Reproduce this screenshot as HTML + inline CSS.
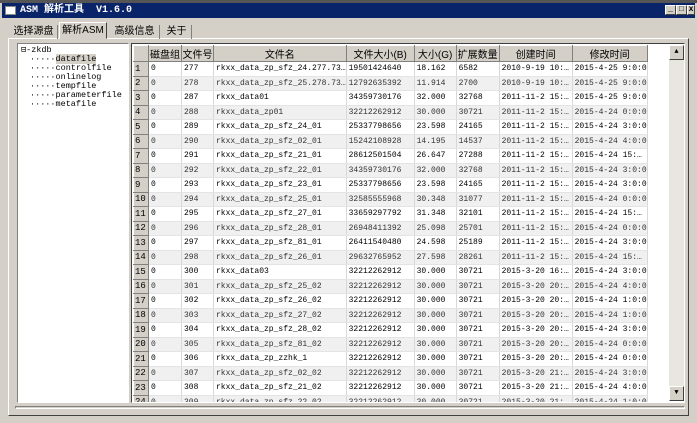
<!DOCTYPE html>
<html><head><meta charset="utf-8"><style>
*{margin:0;padding:0;box-sizing:border-box}
body{width:697px;height:423px;background:#d4d0c8;position:relative;overflow:hidden;font-family:"Liberation Mono","Noto Sans CJK SC",monospace;font-size:8px;color:#000}
.ab{position:absolute}
#top{left:0;top:0;width:697px;height:3px;background:#555}
#title{left:2px;top:3px;width:693px;height:15px;background:#0a246a;color:#fff;font-weight:bold;font-size:10px;line-height:15px;padding-left:18px}
.wb{position:absolute;top:2px;width:11px;height:10px;background:#d4d0c8;border:1px solid;border-color:#fff #404040 #404040 #fff;color:#000;font-size:8px;line-height:8px;text-align:center}
.tab{position:absolute;top:25px;height:14px;font-family:"Liberation Sans","Noto Sans CJK SC",sans-serif;font-size:10px;line-height:13px;text-align:center;border-right:1px solid #808080}
#panel{left:8px;top:38px;width:681px;height:378px;border:1px solid;border-color:#fff #404040 #404040 #fff}
#tree{left:17px;top:43px;width:112px;height:360px;background:#fff;border:1px solid;border-color:#808080 #fff #fff #808080}
#tree div{position:absolute;left:28px;font-size:8.5px;line-height:9px}
#grid{left:131px;top:43px;width:554px;height:360px;background:#fff;border:1px solid;border-color:#404040 #fff #fff #404040;overflow:hidden}
table{border-collapse:collapse;position:absolute;left:1px;top:1px;table-layout:fixed}
td{height:14.5px;white-space:nowrap;overflow:hidden;padding-left:2px;border-right:1px solid #d8d8d8;border-bottom:1px solid #e4e4e4;font-size:8px}
th{height:16px;background:#d4d0c8;font-weight:normal;font-family:"Liberation Sans","Noto Sans CJK SC",sans-serif;font-size:10px;border:1px solid;border-color:#fff #808080 #808080 #fff}
td.h{background:#d4d0c8;border:1px solid;border-color:#fff #808080 #808080 #fff;font-size:9px;padding-left:1px}
tr.g td{background:#f0f0f0;color:#333}
tr.g td.h{background:#d4d0c8;color:#000}
#sb{left:537px;top:1px;width:15px;height:356px;background:#e8e6e0}
.sbb{position:absolute;left:0;width:15px;height:15px;background:#d4d0c8;border:1px solid;border-color:#fff #404040 #404040 #fff;font-size:7px;text-align:center;line-height:12px}
</style></head><body>
<div class="ab" id="top"></div>
<div class="ab" id="title"><span style="position:absolute;left:3px;top:3px;width:11px;height:9px;background:#fff;border:1px solid #888"></span>ASM 解析工具 &nbsp;V1.6.0
<div class="wb" style="left:663px">_</div><div class="wb" style="left:674px">□</div><div class="wb" style="left:685px;width:8px">x</div></div>
<div class="ab" id="panel"></div>
<div class="tab" style="left:10px;width:48px">选择源盘</div>
<div class="tab" style="left:59px;width:48px;top:22px;height:17px;background:#d4d0c8;border:1px solid;border-color:#fff #404040 transparent #fff;line-height:15px">解析ASM</div>
<div class="tab" style="left:110px;width:50px">高级信息</div>
<div class="tab" style="left:162px;width:30px">关于</div>
<div class="ab" id="tree">
<div style="left:3px;top:2px">⊟-zkdb</div>
<div style="top:11px;left:12px">·····<span style="background:#d4d0c8">datafile</span></div>
<div style="top:20px;left:12px">·····controlfile</div>
<div style="top:29px;left:12px">·····onlinelog</div>
<div style="top:38px;left:12px">·····tempfile</div>
<div style="top:47px;left:12px">·····parameterfile</div>
<div style="top:56px;left:12px">·····metafile</div>
</div>
<div class="ab" id="grid">
<table>
<colgroup><col style="width:15px"><col style="width:33px"><col style="width:32px"><col style="width:130px"><col style="width:68px"><col style="width:42px"><col style="width:43px"><col style="width:73px"><col style="width:72px"></colgroup>
<tr><th style="background:#d4d0c8"></th><th>磁盘组</th><th>文件号</th><th>文件名</th><th>文件大小(B)</th><th>大小(G)</th><th>扩展数量</th><th>创建时间</th><th>修改时间</th></tr>
<tr><td class="h">1</td><td>0</td><td>277</td><td>rkxx_data_zp_sfz_24.277.73…</td><td>19501424640</td><td>18.162</td><td>6582</td><td>2010-9-19 10:…</td><td>2015-4-25 9:0:0</td></tr>
<tr class="g"><td class="h">2</td><td>0</td><td>278</td><td>rkxx_data_zp_sfz_25.278.73…</td><td>12792635392</td><td>11.914</td><td>2700</td><td>2010-9-19 10:…</td><td>2015-4-25 9:0:0</td></tr>
<tr><td class="h">3</td><td>0</td><td>287</td><td>rkxx_data01</td><td>34359730176</td><td>32.000</td><td>32768</td><td>2011-11-2 15:…</td><td>2015-4-25 9:0:0</td></tr>
<tr class="g"><td class="h">4</td><td>0</td><td>288</td><td>rkxx_data_zp01</td><td>32212262912</td><td>30.000</td><td>30721</td><td>2011-11-2 15:…</td><td>2015-4-24 0:0:0</td></tr>
<tr><td class="h">5</td><td>0</td><td>289</td><td>rkxx_data_zp_sfz_24_01</td><td>25337798656</td><td>23.598</td><td>24165</td><td>2011-11-2 15:…</td><td>2015-4-24 3:0:0</td></tr>
<tr class="g"><td class="h">6</td><td>0</td><td>290</td><td>rkxx_data_zp_sfz_02_01</td><td>15242108928</td><td>14.195</td><td>14537</td><td>2011-11-2 15:…</td><td>2015-4-24 4:0:0</td></tr>
<tr><td class="h">7</td><td>0</td><td>291</td><td>rkxx_data_zp_sfz_21_01</td><td>28612501504</td><td>26.647</td><td>27288</td><td>2011-11-2 15:…</td><td>2015-4-24 15:…</td></tr>
<tr class="g"><td class="h">8</td><td>0</td><td>292</td><td>rkxx_data_zp_sfz_22_01</td><td>34359730176</td><td>32.000</td><td>32768</td><td>2011-11-2 15:…</td><td>2015-4-24 3:0:0</td></tr>
<tr><td class="h">9</td><td>0</td><td>293</td><td>rkxx_data_zp_sfz_23_01</td><td>25337798656</td><td>23.598</td><td>24165</td><td>2011-11-2 15:…</td><td>2015-4-24 3:0:0</td></tr>
<tr class="g"><td class="h">10</td><td>0</td><td>294</td><td>rkxx_data_zp_sfz_25_01</td><td>32585555968</td><td>30.348</td><td>31077</td><td>2011-11-2 15:…</td><td>2015-4-24 0:0:0</td></tr>
<tr><td class="h">11</td><td>0</td><td>295</td><td>rkxx_data_zp_sfz_27_01</td><td>33659297792</td><td>31.348</td><td>32101</td><td>2011-11-2 15:…</td><td>2015-4-24 15:…</td></tr>
<tr class="g"><td class="h">12</td><td>0</td><td>296</td><td>rkxx_data_zp_sfz_28_01</td><td>26948411392</td><td>25.098</td><td>25701</td><td>2011-11-2 15:…</td><td>2015-4-24 0:0:0</td></tr>
<tr><td class="h">13</td><td>0</td><td>297</td><td>rkxx_data_zp_sfz_81_01</td><td>26411540480</td><td>24.598</td><td>25189</td><td>2011-11-2 15:…</td><td>2015-4-24 3:0:0</td></tr>
<tr class="g"><td class="h">14</td><td>0</td><td>298</td><td>rkxx_data_zp_sfz_26_01</td><td>29632765952</td><td>27.598</td><td>28261</td><td>2011-11-2 15:…</td><td>2015-4-24 15:…</td></tr>
<tr><td class="h">15</td><td>0</td><td>300</td><td>rkxx_data03</td><td>32212262912</td><td>30.000</td><td>30721</td><td>2015-3-20 16:…</td><td>2015-4-24 3:0:0</td></tr>
<tr class="g"><td class="h">16</td><td>0</td><td>301</td><td>rkxx_data_zp_sfz_25_02</td><td>32212262912</td><td>30.000</td><td>30721</td><td>2015-3-20 20:…</td><td>2015-4-24 4:0:0</td></tr>
<tr><td class="h">17</td><td>0</td><td>302</td><td>rkxx_data_zp_sfz_26_02</td><td>32212262912</td><td>30.000</td><td>30721</td><td>2015-3-20 20:…</td><td>2015-4-24 1:0:0</td></tr>
<tr class="g"><td class="h">18</td><td>0</td><td>303</td><td>rkxx_data_zp_sfz_27_02</td><td>32212262912</td><td>30.000</td><td>30721</td><td>2015-3-20 20:…</td><td>2015-4-24 1:0:0</td></tr>
<tr><td class="h">19</td><td>0</td><td>304</td><td>rkxx_data_zp_sfz_28_02</td><td>32212262912</td><td>30.000</td><td>30721</td><td>2015-3-20 20:…</td><td>2015-4-24 3:0:0</td></tr>
<tr class="g"><td class="h">20</td><td>0</td><td>305</td><td>rkxx_data_zp_sfz_81_02</td><td>32212262912</td><td>30.000</td><td>30721</td><td>2015-3-20 20:…</td><td>2015-4-24 0:0:0</td></tr>
<tr><td class="h">21</td><td>0</td><td>306</td><td>rkxx_data_zp_zzhk_1</td><td>32212262912</td><td>30.000</td><td>30721</td><td>2015-3-20 20:…</td><td>2015-4-24 0:0:0</td></tr>
<tr class="g"><td class="h">22</td><td>0</td><td>307</td><td>rkxx_data_zp_sfz_02_02</td><td>32212262912</td><td>30.000</td><td>30721</td><td>2015-3-20 21:…</td><td>2015-4-24 3:0:0</td></tr>
<tr><td class="h">23</td><td>0</td><td>308</td><td>rkxx_data_zp_sfz_21_02</td><td>32212262912</td><td>30.000</td><td>30721</td><td>2015-3-20 21:…</td><td>2015-4-24 4:0:0</td></tr>
<tr class="g"><td class="h">24</td><td>0</td><td>309</td><td>rkxx_data_zp_sfz_22_02</td><td>32212262912</td><td>30.000</td><td>30721</td><td>2015-3-20 21:…</td><td>2015-4-24 1:0:0</td></tr>
</table>
<div class="ab" id="sb"><div class="sbb" style="top:0">▲</div><div class="sbb" style="top:341px">▼</div></div>
</div>
<div class="ab" style="left:15px;top:406px;width:670px;height:3px;border:1px solid;border-color:#808080 #fff #fff #808080"></div>
</body></html>
